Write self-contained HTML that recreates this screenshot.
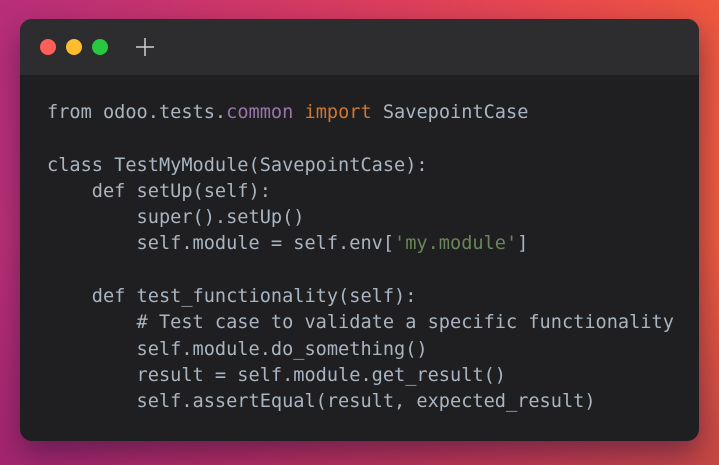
<!DOCTYPE html>
<html><head><style>
html,body{margin:0;padding:0;width:719px;height:465px;overflow:hidden}
body{background:linear-gradient(100deg,#b82e7a 0%,#d83a62 40%,#ec4c4a 75%,#f06038 100%);position:relative}
.bg2{position:absolute;inset:0;background:linear-gradient(180deg,rgba(0,0,0,0) 50%,rgba(80,0,100,0.25) 100%)}
.win{position:absolute;left:20px;top:19px;width:679px;height:422px;border-radius:12px;background:#1f1f21;overflow:hidden;box-shadow:0 12px 30px rgba(40,20,60,0.55)}
.hd{height:56px;background:#2d2d2f;position:relative}
.dot{position:absolute;top:20px;width:16px;height:16px;border-radius:50%}
.plus{position:absolute;left:115px;top:18px;width:20px;height:20px}
pre{margin:0;position:absolute;left:27px;top:81px;font-family:"DejaVu Sans Mono","Liberation Mono",monospace;font-size:18.6px;line-height:26.3px;color:#a9b5c2}
.k{color:#cc7832}.p{color:#9876aa}.s{color:#6a8759}
</style></head><body><div class="bg2"></div>
<div class="win"><div class="hd">
<div class="dot" style="left:20px;background:#ff5f57"></div>
<div class="dot" style="left:46px;background:#febc2e"></div>
<div class="dot" style="left:72px;background:#28c840"></div>
<svg class="plus" viewBox="0 0 20 20"><path d="M10 1V19M1 10H19" stroke="#cfcfcf" stroke-width="1.5"/></svg>
</div>
<pre>from odoo.tests.<span class="p">common</span> <span class="k">import</span> SavepointCase

class TestMyModule(SavepointCase):
    def setUp(self):
        super().setUp()
        self.module = self.env[<span class="s">'my.module'</span>]

    def test_functionality(self):
        # Test case to validate a specific functionality
        self.module.do_something()
        result = self.module.get_result()
        self.assertEqual(result, expected_result)</pre>
</div></body></html>
